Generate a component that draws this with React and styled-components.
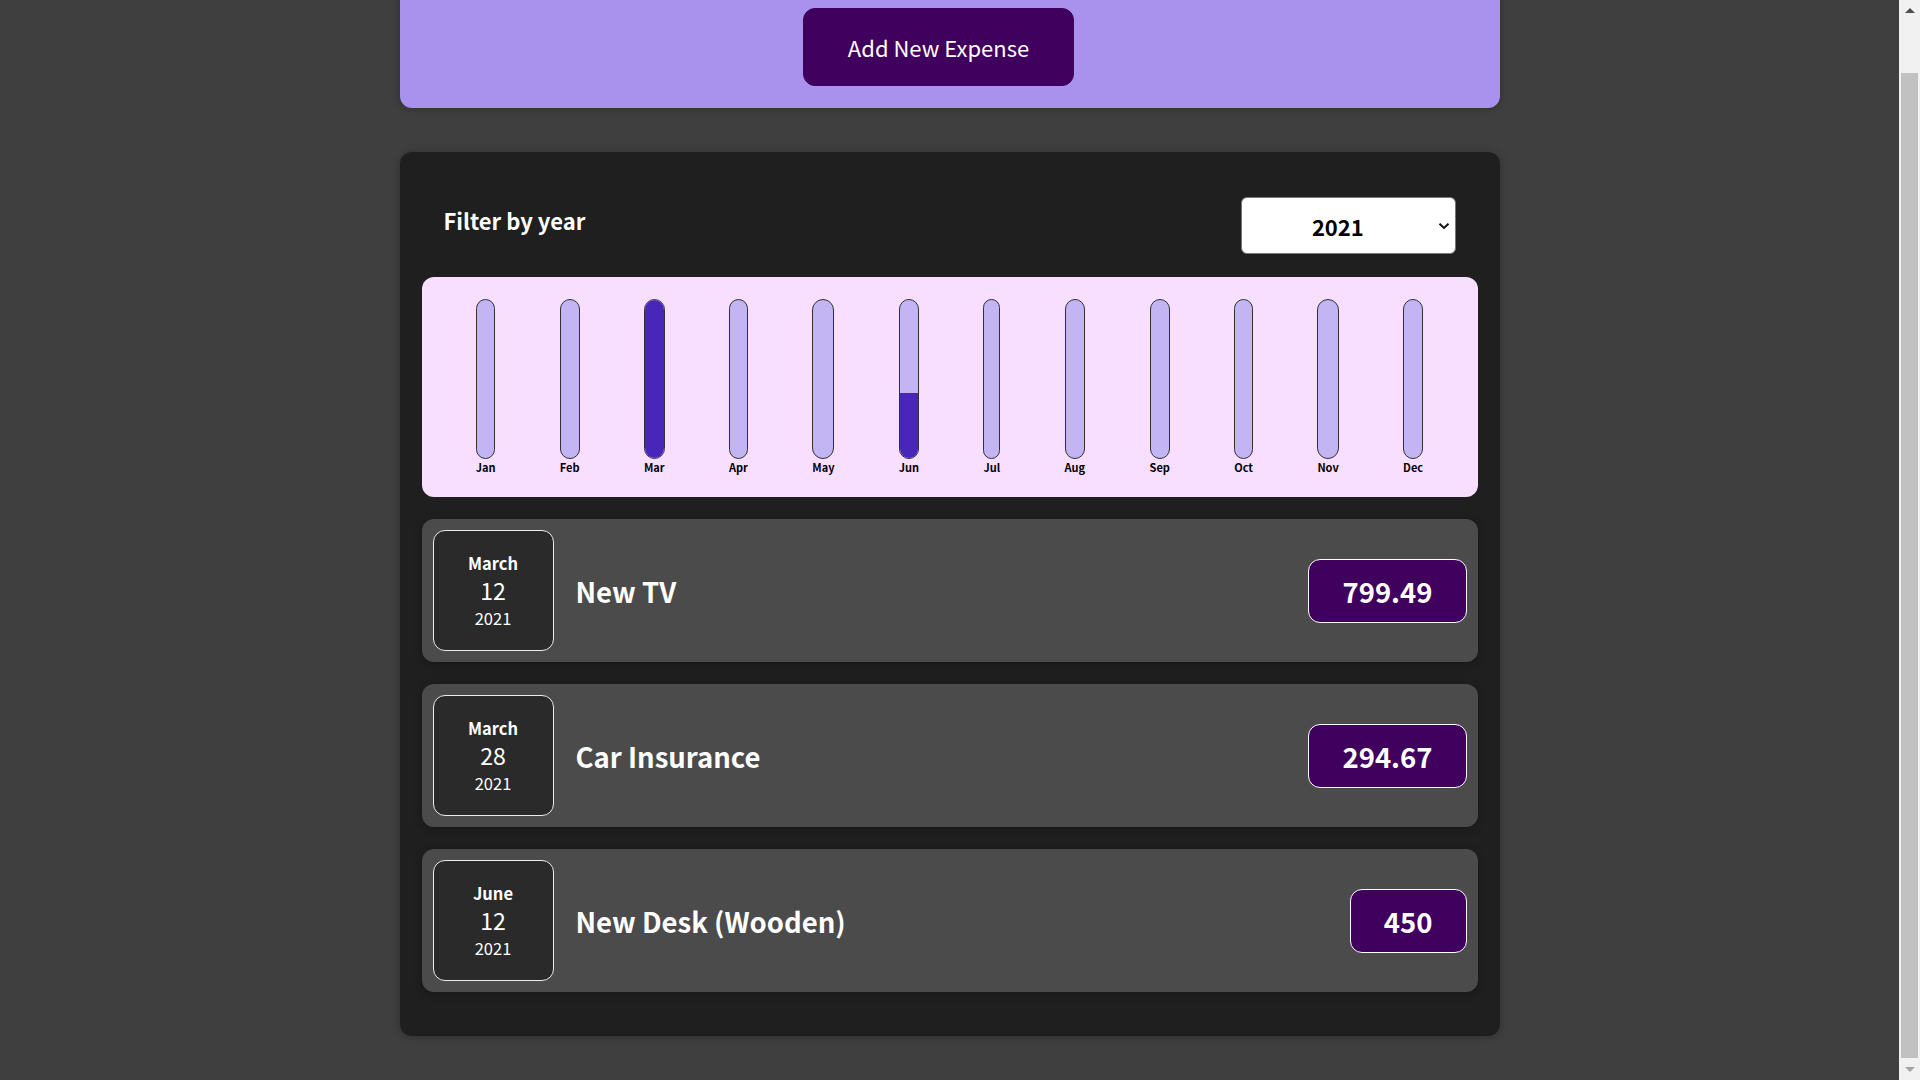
import React, { useLayoutEffect, useRef, useState } from 'react';
import styled, { createGlobalStyle } from 'styled-components';

const GlobalStyle = createGlobalStyle`
    * {
        box-sizing: border-box;
    }
    html {
        font-family: "Noto Sans CJK JP", "Noto Sans", sans-serif;
        font-size: 22px;
    }
    body {
        margin: 0;
        background-color: #3f3f3f;
        overflow: hidden;
    }
`;

const Frame = styled.div`
    display: flex;
    height: 100vh;
`;

const Scroller = styled.div`
    flex: 1;
    overflow-y: scroll;
    scrollbar-width: none;
    &::-webkit-scrollbar {
        display: none;
    }
`;

const ScrollBar = styled.div`
    width: 21px;
    flex-shrink: 0;
    display: flex;
    flex-direction: column;
    background-color: #f1f1f1;
`;

const ScrollArrow = styled.div`
    height: 21px;
    display: flex;
    align-items: center;
    justify-content: center;
    color: ${(props) => props.color};
`;

const ScrollTrack = styled.div`
    flex: 1;
    display: flex;
    flex-direction: column;
    justify-content: flex-end;
    padding: 0 2px 1px;
`;

const ScrollThumb = styled.div`
    background-color: #c1c1c1;
    width: 100%;
`;

const Page = styled.div`
    display: flex;
    flex-direction: column;
    gap: 2rem;
    padding: 2rem 0;
`;

const Card = styled.div`
    width: 50rem;
    max-width: 95%;
    margin: 0 auto;
    border-radius: 12px;
    box-shadow: 0 1px 8px rgba(0, 0, 0, 0.25);
`;

const NewExpense = styled(Card)`
    background-color: #a892ee;
    padding: 1rem;
    text-align: center;
`;

const AddButton = styled.button`
    font: inherit;
    cursor: pointer;
    padding: 1rem 2rem;
    border: 1px solid #40005d;
    background-color: #40005d;
    color: white;
    border-radius: 12px;
    margin-right: 1rem;
`;

const Expenses = styled(Card)`
    padding: 1rem;
    background-color: rgb(31, 31, 31);
`;

const Filter = styled.div`
    color: white;
    padding: 0 1rem;
`;

const FilterControl = styled.div`
    display: flex;
    width: 100%;
    align-items: center;
    justify-content: space-between;
    margin: calc(1rem + 1px) 0;
`;

const FilterLabel = styled.label`
    font-weight: bold;
    margin-bottom: 0.5rem;
`;

const SelectWrap = styled.div`
    position: relative;
    display: flex;
`;

const YearSelect = styled.select`
    appearance: none;
    font: inherit;
    font-weight: bold;
    color: black;
    background-color: white;
    border: 1px solid #767676;
    border-radius: 6px;
    width: 215px;
    padding: 0.5rem 2rem 0.5rem 3.2rem;
    height: 57px;
`;

const Chevron = styled.svg`
    position: absolute;
    right: 6px;
    top: 50%;
    margin-top: -4px;
    pointer-events: none;
`;

const Chart = styled.div`
    padding: 1rem;
    border-radius: 12px;
    background-color: #f8dfff;
    text-align: center;
    display: flex;
    justify-content: space-around;
    height: 10rem;
`;

const ChartBar = styled.div`
    height: 100%;
    display: flex;
    flex-direction: column;
    align-items: center;
`;

const BarInner = styled.div`
    height: 100%;
    width: 100%;
    border: 1px solid #313131;
    border-radius: 12px;
    background-color: #c3b4f3;
    overflow: hidden;
    display: flex;
    flex-direction: column;
    justify-content: flex-end;
`;

const BarFill = styled.div`
    background-color: #4826b9;
    width: 100%;
`;

const BarLabel = styled.div`
    font-weight: bold;
    font-size: 0.5rem;
    text-align: center;
`;

const ExpenseItem = styled.div`
    display: flex;
    justify-content: space-between;
    align-items: center;
    box-shadow: 0 2px 8px rgba(0, 0, 0, 0.25);
    padding: 0.5rem;
    margin: 1rem 0;
    border-radius: 12px;
    background-color: #4b4b4b;
`;

const DateBox = styled.div`
    display: flex;
    flex-direction: column;
    width: 5.5rem;
    height: 5.5rem;
    border: 1px solid #ececec;
    background-color: #2a2a2a;
    color: white;
    border-radius: 12px;
    align-items: center;
    justify-content: center;
`;

const DateMonth = styled.div`
    font-size: 0.75rem;
    font-weight: bold;
`;

const DateDay = styled.div`
    font-size: 1.05rem;
    line-height: 1.35;
`;

const DateYear = styled.div`
    font-size: 0.75rem;
`;

const Description = styled.div`
    display: flex;
    flex-direction: row;
    align-items: center;
    justify-content: flex-start;
    flex: 1;
`;

const Title = styled.h2`
    flex: 1;
    margin: 0 1rem;
    color: white;
    font-size: 1.25rem;
`;

const Price = styled.div`
    font-size: 1.25rem;
    font-weight: bold;
    color: white;
    background-color: #40005d;
    border: 1px solid white;
    padding: 0.5rem 1.5rem;
    border-radius: 12px;
`;

const MONTHS = ['Jan', 'Feb', 'Mar', 'Apr', 'May', 'Jun', 'Jul', 'Aug', 'Sep', 'Oct', 'Nov', 'Dec'];

const expenses = [
    { id: 'e1', title: 'New TV', amount: 799.49, date: new Date(2021, 2, 12) },
    { id: 'e2', title: 'Car Insurance', amount: 294.67, date: new Date(2021, 2, 28) },
    { id: 'e3', title: 'New Desk (Wooden)', amount: 450, date: new Date(2021, 5, 12) },
];

function ExpenseDate(props) {
    const month = props.date.toLocaleString('en-US', { month: 'long' });
    return (
        <DateBox>
            <DateMonth>{month}</DateMonth>
            <DateDay>{props.date.getDate()}</DateDay>
            <DateYear>{props.date.getFullYear()}</DateYear>
        </DateBox>
    );
}

function ExpensesChart(props) {
    const values = MONTHS.map(() => 0);
    props.items.forEach((e) => {
        values[e.date.getMonth()] += e.amount;
    });
    const max = Math.max(...values);

    return (
        <Chart>
            {MONTHS.map((m, i) => (
                <ChartBar key={m}>
                    <BarInner>
                        <BarFill style={{ height: max > 0 ? Math.round((values[i] / max) * 100) + '%' : '0%' }} />
                    </BarInner>
                    <BarLabel>{m}</BarLabel>
                </ChartBar>
            ))}
        </Chart>
    );
}

export default function App() {
    const [year, setYear] = useState('2021');
    const [thumb, setThumb] = useState(983);
    const scrollRef = useRef(null);
    const trackRef = useRef(null);

    useLayoutEffect(() => {
        const el = scrollRef.current;
        el.scrollTop = el.scrollHeight;
        const track = trackRef.current.clientHeight;
        setThumb(Math.round((track * el.clientHeight) / el.scrollHeight));
    }, []);

    const filtered = expenses.filter((e) => e.date.getFullYear().toString() === year);

    return (
        <Frame>
            <GlobalStyle />
            <Scroller ref={scrollRef}>
                <Page>
                    <NewExpense>
                        <AddButton>Add New Expense</AddButton>
                    </NewExpense>
                    <Expenses>
                        <Filter>
                            <FilterControl>
                                <FilterLabel>Filter by year</FilterLabel>
                                <SelectWrap>
                                    <YearSelect value={year} onChange={(e) => setYear(e.target.value)}>
                                        <option value="2022">2022</option>
                                        <option value="2021">2021</option>
                                        <option value="2020">2020</option>
                                        <option value="2019">2019</option>
                                    </YearSelect>
                                    <Chevron width="12" height="8" viewBox="0 0 12 8">
                                        <path d="M1.5 1.8 L6 6 L10.5 1.8" fill="none" stroke="#111" strokeWidth="2" />
                                    </Chevron>
                                </SelectWrap>
                            </FilterControl>
                        </Filter>
                        <ExpensesChart items={filtered} />
                        {filtered.map((e) => (
                            <ExpenseItem key={e.id}>
                                <ExpenseDate date={e.date} />
                                <Description>
                                    <Title>{e.title}</Title>
                                    <Price>{e.amount}</Price>
                                </Description>
                            </ExpenseItem>
                        ))}
                    </Expenses>
                </Page>
            </Scroller>
            <ScrollBar>
                <ScrollArrow color="#505050">
                    <svg width="10" height="5" viewBox="0 0 10 5">
                        <path d="M0 5 L5 0 L10 5 Z" fill="currentColor" />
                    </svg>
                </ScrollArrow>
                <ScrollTrack ref={trackRef}>
                    <ScrollThumb style={{ height: thumb }} />
                </ScrollTrack>
                <ScrollArrow color="#a3a3a3">
                    <svg width="10" height="5" viewBox="0 0 10 5">
                        <path d="M0 0 L10 0 L5 5 Z" fill="currentColor" />
                    </svg>
                </ScrollArrow>
            </ScrollBar>
        </Frame>
    );
}
